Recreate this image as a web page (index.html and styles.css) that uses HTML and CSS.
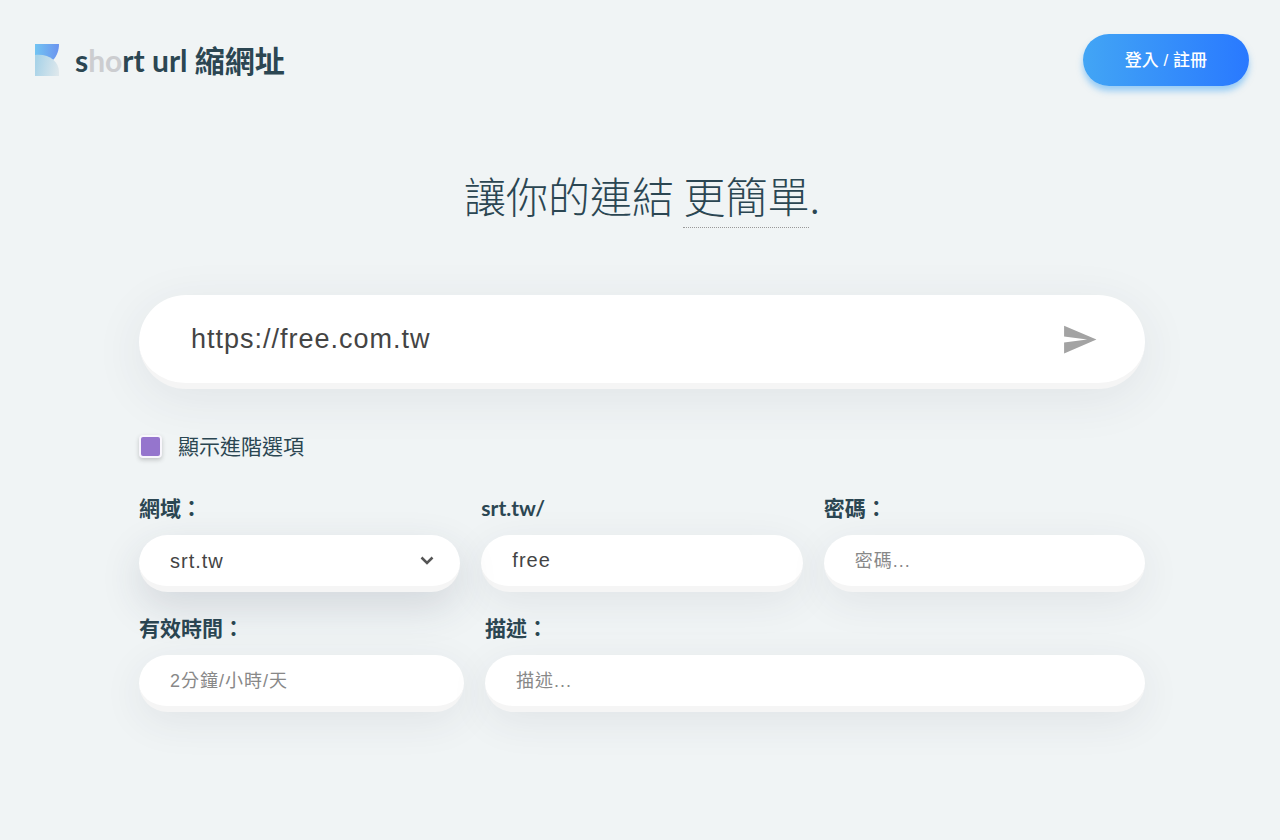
FILE: index.html
```
<!DOCTYPE html>
<html lang="zh-Hant">
<head>
    <meta charset="UTF-8">
    <meta name="viewport" content="width=device-width, initial-scale=1.0">
    <title>short url 縮網址</title>
    <link rel="stylesheet" href="styles.css">
</head>
<body>

    <header class="header">
        <a class="logo" href="/">
            <svg class="logo-icon" width="24" height="32" viewBox="0 0 24 32" aria-hidden="true">
                <defs>
                    <linearGradient id="logoTop" x1="0" y1="0" x2="1" y2="0">
                        <stop offset="0" stop-color="#72c4f2"/>
                        <stop offset="1" stop-color="#6b93ef"/>
                    </linearGradient>
                    <linearGradient id="logoBottom" x1="0" y1="0.6" x2="1" y2="0.8">
                        <stop offset="0" stop-color="#a9d3e8"/>
                        <stop offset="1" stop-color="#dfe8ec"/>
                    </linearGradient>
                </defs>
                <path d="M0 0H24C24 6 22 12 18 16L0 13Z" fill="url(#logoTop)"/>
                <path d="M0 11C7 10 14 12 18 15.500C22 19 24 23 24 28V32H0Z" fill="url(#logoBottom)"/>
            </svg>
            <span>s<span class="logo-muted">ho</span>rt url 縮網址</span>
        </a>
        <button type="button" class="login-button">登入 / 註冊</button>
    </header>

    <main class="main">
        <h1 class="title">讓你的連結 <span class="title-underline">更簡單</span>.</h1>

        <form class="shortener">
            <div class="url-box">
                <input class="url-input" type="text" name="target" aria-label="網址" value="https://free.com.tw">
                <button type="submit" class="send-button" aria-label="送出">
                    <svg width="37" height="37" viewBox="0 0 24 24" aria-hidden="true">
                        <path d="M2.01 21L23 12 2.01 3 2 10l15 2-15 2z" fill="#a3a3a3"/>
                    </svg>
                </button>
            </div>

            <label class="advanced-toggle">
                <input class="checkbox" type="checkbox" name="advanced" checked>
                <span>顯示進階選項</span>
            </label>

            <div class="row row-three">
                <div class="field">
                    <label for="domain">網域：</label>
                    <div class="select-box">
                        <select class="input input-active" id="domain" name="domain">
                            <option selected>srt.tw</option>
                        </select>
                        <svg class="chevron" width="14" height="9" viewBox="0 0 14 9" aria-hidden="true">
                            <path d="M1.5 1.5L7 7L12.5 1.5" fill="none" stroke="#555" stroke-width="2.5"/>
                        </svg>
                    </div>
                </div>
                <div class="field">
                    <label for="customurl">srt.tw/</label>
                    <input class="input" type="text" id="customurl" name="customurl" value="free">
                </div>
                <div class="field">
                    <label for="password">密碼：</label>
                    <input class="input" type="password" id="password" name="password" placeholder="密碼...">
                </div>
            </div>

            <div class="row row-two">
                <div class="field">
                    <label for="expire">有效時間：</label>
                    <input class="input" type="text" id="expire" name="expire_in" placeholder="2分鐘/小時/天">
                </div>
                <div class="field">
                    <label for="description">描述：</label>
                    <input class="input" type="text" id="description" name="description" placeholder="描述...">
                </div>
            </div>
        </form>
    </main>

</body>
</html>
```

FILE: styles.css
```
* {
    box-sizing: border-box;
}

body {
    margin: 0;
    background-color: #f0f4f5;
    color: #2b4652;
    font-family: Lato, "Noto Sans CJK TC", sans-serif;
    font-size: 21px;
}

input, select, button {
    font-family: "Liberation Sans", "Noto Sans CJK TC", sans-serif;
}

.header {
    display: flex;
    align-items: center;
    justify-content: space-between;
    height: 120px;
    padding: 0 31px 0 35px;
}

.logo {
    display: flex;
    align-items: center;
    gap: 16px;
    color: inherit;
    font-size: 30px;
    font-weight: 700;
    line-height: 40px;
    text-decoration: none;
}

.logo-muted {
    color: #cccdd0;
}

.login-button {
    height: 52px;
    padding: 0 42px 4px;
    border: none;
    border-radius: 26px;
    background: linear-gradient(to right, #42a5f5, #2979ff);
    box-shadow: 0 5px 6px rgba(66, 165, 245, 0.5);
    color: #fff;
    font-size: 17px;
    font-weight: 500;
    cursor: pointer;
}

.main {
    padding: 43px 135px 60px 139px;
}

.title {
    margin: 0 0 67px;
    font-family: "Noto Sans CJK TC", sans-serif;
    font-size: 42px;
    font-weight: 200;
    line-height: 64px;
    text-align: center;
}

.title-underline {
    display: inline-block;
    border-bottom: 1px dotted #999;
}

.url-box {
    display: flex;
    align-items: center;
    height: 94px;
    padding: 0 47px 0 0;
    border-bottom: 6px solid #f5f5f5;
    border-radius: 47px;
    background-color: #fff;
    box-shadow: 0 10px 50px rgba(50, 55, 80, 0.08);
}

.url-input {
    flex: 1;
    min-width: 0;
    height: 88px;
    padding: 0 20px 0 52px;
    border: none;
    background: none;
    color: #444;
    font-size: 27px;
    letter-spacing: 1px;
    outline: none;
}

.send-button {
    display: flex;
    padding: 0;
    border: none;
    background: none;
    cursor: pointer;
}

.advanced-toggle {
    display: inline-flex;
    align-items: center;
    gap: 16px;
    margin: 42px 0 31px;
    line-height: 30px;
}

.checkbox {
    width: 23px;
    height: 23px;
    margin: 0;
    border: 2px solid #f8f6fc;
    border-radius: 4px;
    background-color: #9575cd;
    box-shadow: 0 2px 4px rgba(50, 50, 50, 0.25);
    appearance: none;
}

.row {
    display: grid;
    gap: 21px;
    margin-bottom: 20px;
}

.row-three {
    grid-template-columns: repeat(3, 1fr);
}

.row-two {
    grid-template-columns: 33fr 67fr;
}

.field label {
    display: block;
    margin-bottom: 12px;
    font-weight: 700;
    line-height: 31px;
}

.input {
    display: block;
    width: 100%;
    height: 57px;
    padding: 0 31px;
    border: none;
    border-bottom: 6px solid #f5f5f5;
    border-radius: 29px;
    background-color: #fff;
    box-shadow: 0 10px 40px rgba(50, 55, 80, 0.08);
    color: #444;
    font-size: 20px;
    letter-spacing: 1px;
    outline: none;
    appearance: none;
}

.input::placeholder {
    color: #888;
    font-size: 18px;
}

.input-active,
.input:focus {
    box-shadow: 0 15px 40px rgba(50, 55, 80, 0.15);
}

.select-box {
    position: relative;
}

.chevron {
    position: absolute;
    top: 21px;
    right: 26px;
    pointer-events: none;
}
```
